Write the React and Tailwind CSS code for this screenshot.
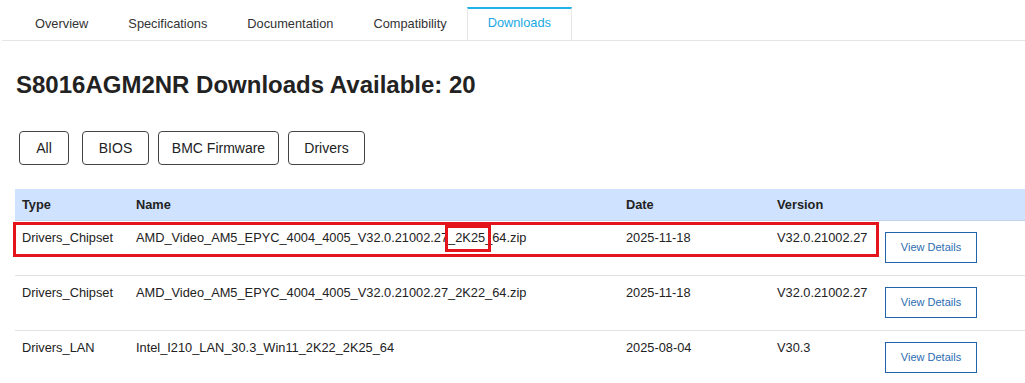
import React from "react";

const tabs = ["Overview", "Specifications", "Documentation", "Compatibility", "Downloads"];

const rows = [
  { type: "Drivers_Chipset", name: "AMD_Video_AM5_EPYC_4004_4005_V32.0.21002.27_2K25_64.zip", date: "2025-11-18", version: "V32.0.21002.27", marked: true },
  { type: "Drivers_Chipset", name: "AMD_Video_AM5_EPYC_4004_4005_V32.0.21002.27_2K22_64.zip", date: "2025-11-18", version: "V32.0.21002.27" },
  { type: "Drivers_LAN", name: "Intel_I210_LAN_30.3_Win11_2K22_2K25_64", date: "2025-08-04", version: "V30.3" },
];

function NameCell({ row }) {
  if (!row.marked) return <span>{row.name}</span>;
  return (
    <span>
      AMD_Video_AM5_EPYC_4004_4005_V32.0.21002.27
      <span className="relative">
        _2K25
        <span className="absolute left-[-3px] right-[-6px] top-[-5px] bottom-[-7px] border-[3px] border-[#e3141b]"></span>
      </span>
      _64.zip
    </span>
  );
}

export default function App() {
  return (
    <div className="w-[1025px] h-[383px] overflow-hidden bg-white text-[#222] font-['Liberation_Sans',Arial,sans-serif]">
      {/* Tabs */}
      <div className="ml-[2px] pt-[7px] border-b border-[#e6e6e6] flex pl-[13px]">
        {tabs.map((t) => {
          const active = t === "Downloads";
          return (
            <div
              key={t}
              className={
                active
                  ? "h-[33px] px-[20px] flex items-center pb-[3px] text-[12.8px] text-[#1aa9e3] bg-white border-t-2 border-t-[#1fb0e6] border-x border-x-[#e6e6e6] -mb-px"
                  : "h-[33px] px-[20px] flex items-center pb-[1px] text-[12.8px] text-[#333] border-t-2 border-transparent"
              }
            >
              {t}
            </div>
          );
        })}
      </div>

      {/* Heading */}
      <h1 className="ml-[16px] mt-[30px] text-[24px] leading-[28px] font-bold text-[#222]">
        S8016AGM2NR Downloads Available: 20
      </h1>

      {/* Filter buttons */}
      <div className="flex mt-[32px] ml-[19px]">
        <button className="w-[50px] h-[34px] border border-[#444] rounded-[4px] text-[14px] text-[#222]">All</button>
        <button className="ml-[13px] w-[67px] h-[34px] border border-[#444] rounded-[4px] text-[14px] text-[#222]">BIOS</button>
        <button className="ml-[9px] w-[121px] h-[34px] border border-[#444] rounded-[4px] text-[14px] text-[#222]">BMC Firmware</button>
        <button className="ml-[9px] w-[77px] h-[34px] border border-[#444] rounded-[4px] text-[14px] text-[#222]">Drivers</button>
      </div>

      {/* Table */}
      <div className="ml-[15px] mt-[24px] text-[12.8px]">
        <div className="grid grid-cols-[114px_490px_151px_108px_1fr] h-[32px] items-center bg-[#cfe2ff] border-b border-[#c3d3ea] font-bold">
          <div className="px-[7px]">Type</div>
          <div className="px-[7px]">Name</div>
          <div className="px-[7px]">Date</div>
          <div className="px-[7px]">Version</div>
          <div></div>
        </div>
        {rows.map((r, i) => (
          <div key={i} className="relative grid grid-cols-[114px_490px_151px_108px_1fr] h-[55px] items-start border-b border-[#e2e2e2]">
            <div className="px-[7px] pt-[8px] leading-[18px]">{r.type}</div>
            <div className="px-[7px] pt-[8px] leading-[18px]"><NameCell row={r} /></div>
            <div className="px-[7px] pt-[8px] leading-[18px]">{r.date}</div>
            <div className="px-[7px] pt-[8px] leading-[18px]">{r.version}</div>
            <div className="px-[7px] pt-[11px]">
              <button className="w-[92px] h-[31px] border border-[#2164a8] text-[11px] text-[#2c6cb2]">View Details</button>
            </div>
            {r.marked && (
              <div className="absolute left-[-2px] top-[1px] w-[866px] h-[35px] border-[3px] border-[#e3141b] pointer-events-none"></div>
            )}
          </div>
        ))}
      </div>
    </div>
  );
}
